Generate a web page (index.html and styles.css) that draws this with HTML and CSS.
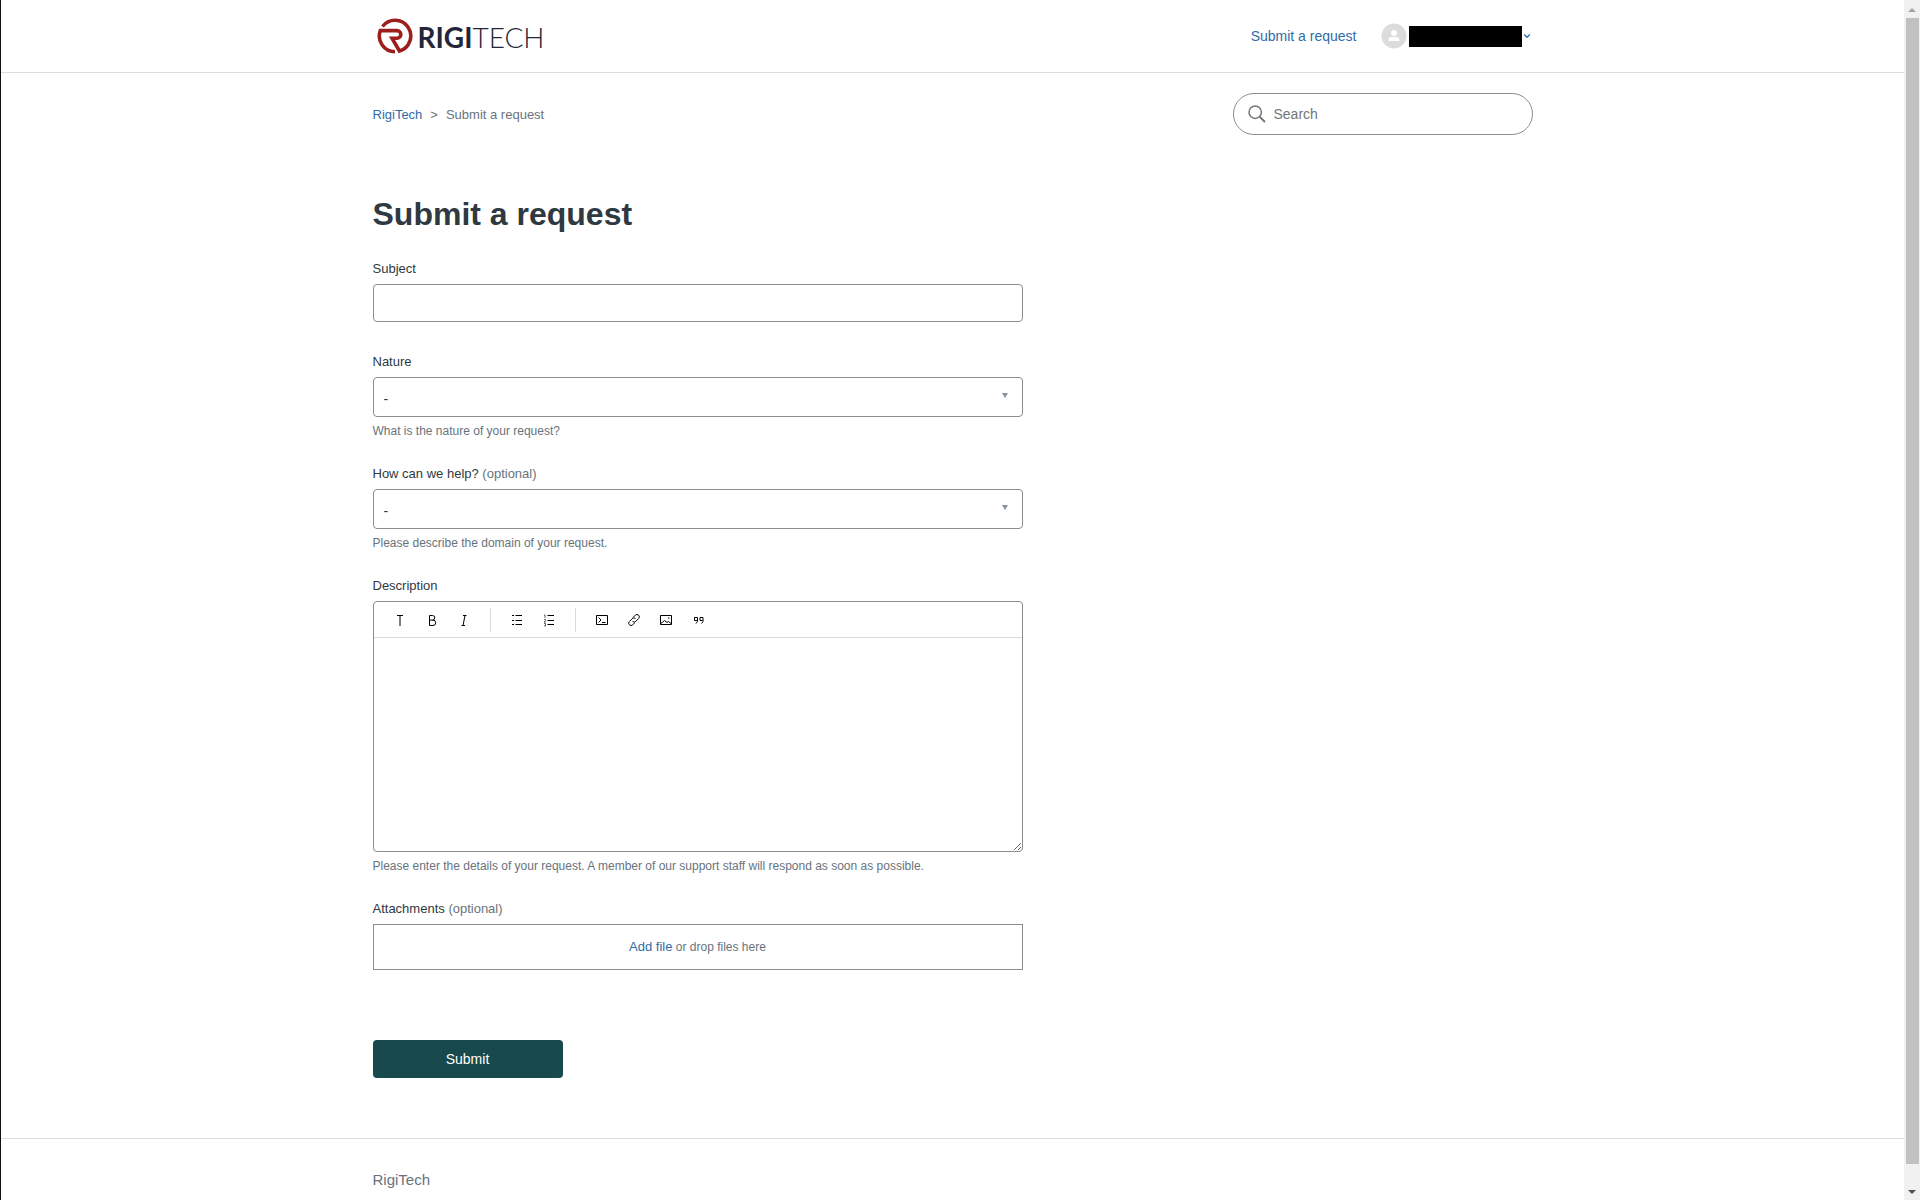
FILE: index.html
```html
<!DOCTYPE html>
<html lang="en">
  <head>
    <meta charset="UTF-8" />
    <meta name="viewport" content="width=device-width, initial-scale=1.0" />
    <title>Submit a request - RigiTech</title>
    <link rel="stylesheet" href="styles.css">
  </head>
  <body>
    <div class="page">
      <header class="header">
        <div class="container header-inner">
          <a class="logo" href="#" aria-label="RigiTech home">
            <svg class="logo-mark" viewBox="0 0 36 36" fill="none" stroke="#9c1f1c" stroke-width="3.6" aria-hidden="true">
              <path d="M5.500 8.500A15.700 15.700 0 1 1 22.500 33L15 20.200H20a3.800 3.800 0 0 0 0-7.600H3.300A15.700 15.700 0 0 0 18 33.700" />
            </svg>
            <span class="logo-text"><b>RIGI</b>TECH</span>
          </a>
          <nav class="user-nav">
            <a href="#">Submit a request</a>
            <button type="button" class="user" aria-label="User menu">
              <svg class="avatar" viewBox="0 0 26 26" aria-hidden="true">
                <circle cx="13" cy="13" r="12.5" fill="#dcdcdc" />
                <circle cx="13" cy="10" r="3" fill="#fff" />
                <path d="M7.5 18v-1.500a3 3 0 0 1 3-2.500h5a3 3 0 0 1 3 2.500v1.500z" fill="#fff" />
              </svg>
              <span class="user-name"></span>
              <svg class="chevron" viewBox="0 0 8 8" fill="none" stroke="#2f6ca8" stroke-width="1.300" aria-hidden="true">
                <path d="M1.200 2.500L4 5.300l2.800-2.800" />
              </svg>
            </button>
          </nav>
        </div>
      </header>

      <main class="container main">
        <div class="sub-nav">
          <ol class="breadcrumbs">
            <li><a href="#">RigiTech</a></li>
            <li>Submit a request</li>
          </ol>
          <form class="search" role="search">
            <svg viewBox="0 0 18 18" fill="none" stroke="#777" stroke-width="1.500" aria-hidden="true">
              <circle cx="7.200" cy="7.200" r="6.200" />
              <path d="M11.700 11.700L17 17" stroke-width="2" />
            </svg>
            <input type="search" placeholder="Search" aria-label="Search" />
          </form>
        </div>

        <h1>Submit a request</h1>

        <form class="request-form">
          <div class="field field-plain">
            <label for="subject">Subject</label>
            <input type="text" id="subject" name="subject" />
          </div>

          <div class="field">
            <label for="nature">Nature</label>
            <div class="select">
              <select id="nature" name="nature">
                <option>-</option>
              </select>
              <svg viewBox="0 0 6 5" fill="#87929d" aria-hidden="true"><path d="M0 0h6L3 5z" /></svg>
            </div>
            <p class="hint">What is the nature of your request?</p>
          </div>

          <div class="field">
            <label for="domain">How can we help? <span>(optional)</span></label>
            <div class="select">
              <select id="domain" name="domain">
                <option>-</option>
              </select>
              <svg viewBox="0 0 6 5" fill="#87929d" aria-hidden="true"><path d="M0 0h6L3 5z" /></svg>
            </div>
            <p class="hint">Please describe the domain of your request.</p>
          </div>

          <div class="field">
            <label for="description">Description</label>
            <div class="editor">
              <div class="toolbar">
                <button type="button" aria-label="Heading">
                  <svg viewBox="0 0 16 16"><path d="M5 3.500h6M8 3.500V14" /></svg>
                </button>
                <button type="button" aria-label="Bold">
                  <svg viewBox="0 0 16 16"><path d="M5.500 3.500V13.500M5.500 3.500H8.500a2.200 2.200 0 0 1 0 4.600H5.500M8.500 8.100h.500a2.500 2.500 0 0 1 0 5.400H5.500" /></svg>
                </button>
                <button type="button" aria-label="Italic">
                  <svg viewBox="0 0 16 16"><path d="M7 3.500h3.500M5.500 13.500H9M9 3.500L7 13.500" /></svg>
                </button>
                <span class="divider"></span>
                <button type="button" aria-label="Bulleted list">
                  <svg viewBox="0 0 16 16"><path d="M6.500 3.500H13M6.500 8.500H13M6.500 12.500H13M3 3.500h2M3 8.500h2M3 12.500h2" /></svg>
                </button>
                <button type="button" aria-label="Numbered list">
                  <svg viewBox="0 0 16 16"><path d="M6.500 3.500H13M6.500 8.500H13M6.500 12.500H13" /><path d="M3 3h1v3M3 7.500h1.500v1L3 10h2M3 11.500h1.500V14H3" stroke-width=".6" /></svg>
                </button>
                <span class="divider"></span>
                <button type="button" aria-label="Code block">
                  <svg viewBox="0 0 16 16"><path d="M2.500 3.500h11v9h-11zM4.500 5.500l2.500 2.500-2.500 2.500M8 10.500h3.500" /></svg>
                </button>
                <button type="button" aria-label="Link">
                  <svg viewBox="0 0 16 16"><path d="M7 5.500l2.300-2.300a2.200 2.200 0 0 1 3.300 3.300L9.800 9.300a2.200 2.200 0 0 1-3.300 0M9 10.500l-2.300 2.300a2.200 2.200 0 0 1-3.300-3.300l2.800-2.800a2.200 2.200 0 0 1 3.300 0" /></svg>
                </button>
                <button type="button" aria-label="Image">
                  <svg viewBox="0 0 16 16"><path d="M2.500 3.500h11v9h-11zM3 11.500L6.500 8.500 9 10.500l1.500-1 2.500 2M10 6h1.500" /></svg>
                </button>
                <button type="button" aria-label="Quote">
                  <svg viewBox="0 0 16 16"><path d="M7 8.500H4.500V5.500h3v4L6 11.500M12.500 8.500H10V5.500h3v4l-1.500 2" /></svg>
                </button>
              </div>
              <textarea id="description" name="description"></textarea>
            </div>
            <p class="hint">Please enter the details of your request. A member of our support staff will respond as soon as possible.</p>
          </div>

          <div class="field">
            <label for="attachments">Attachments <span>(optional)</span></label>
            <div class="dropzone">
              <input type="file" id="attachments" name="attachments" hidden />
              <a href="#">Add file</a>&nbsp;<span>or drop files here</span>
            </div>
          </div>

          <button type="submit" class="submit">Submit</button>
        </form>
      </main>

      <footer class="footer">
        <div class="container">
          <a href="#">RigiTech</a>
        </div>
      </footer>
    </div>

    <div class="scrollbar" aria-hidden="true">
      <svg viewBox="0 0 16 18" fill="#a3a3a3"><path d="M4 12h8L8 8z" /></svg>
      <div class="thumb"></div>
      <svg viewBox="0 0 16 18" fill="#505050"><path d="M4 8h8l-4 4z" /></svg>
    </div>
  </body>
</html>
```

FILE: styles.css
```css
* {
  box-sizing: border-box;
}

body {
  display: flex;
  min-height: 100vh;
  margin: 0;
  padding: 0 2px 2px 0;
  background: #fff;
  color: #2f3941;
  font-family: "Liberation Sans", Arial, sans-serif;
  font-size: 13px;
  line-height: 20px;
}

a {
  color: #2f6ca8;
  text-decoration: none;
}

button,
input,
select,
textarea {
  font: inherit;
  color: inherit;
}

.page {
  flex: 1;
  border-left: 1px solid #111;
}

.container {
  max-width: 1160px;
  margin: 0 auto;
}

/* header */
.header {
  border-bottom: 1px solid #ddd;
}

.header-inner {
  display: flex;
  justify-content: space-between;
  align-items: center;
  height: 72px;
}

.logo {
  display: flex;
  align-items: center;
  gap: 5px;
  padding-left: 4px;
  color: #23263a;
}

.logo-mark {
  width: 36px;
  height: 36px;
}

.logo-text {
  padding-top: 2px;
  font-family: Lato, sans-serif;
  font-size: 28px;
  font-weight: 300;
  line-height: 36px;
}

.logo-text b {
  font-weight: 700;
}

.user-nav {
  display: flex;
  align-items: center;
  gap: 24px;
  font-size: 14px;
}

.user {
  display: flex;
  align-items: center;
  padding: 0;
  border: 0;
  background: none;
}

.avatar {
  width: 26px;
  height: 26px;
  margin-right: 2px;
}

.user-name {
  width: 113px;
  height: 21px;
  background: #000;
}

.chevron {
  width: 8px;
  height: 8px;
  margin: 0 2px 0 1px;
}

/* breadcrumbs and search */
.sub-nav {
  display: flex;
  justify-content: space-between;
  align-items: center;
  padding: 20px 0 57px;
}

.breadcrumbs {
  display: flex;
  margin: 0;
  padding: 2px 0 0;
  list-style: none;
  color: #68737d;
}

.breadcrumbs li + li:before {
  content: ">";
  margin: 0 8px;
}

.search {
  display: flex;
  align-items: center;
  gap: 8px;
  width: 300px;
  height: 42px;
  padding: 0 14px;
  border: 1px solid #878f95;
  border-radius: 21px;
  font-size: 14px;
}

.search svg {
  width: 18px;
  height: 18px;
}

.search input {
  flex: 1;
  min-width: 0;
  padding: 0;
  border: 0;
  outline: 0;
  background: none;
}

.search input::placeholder {
  color: #757575;
}

h1 {
  margin: 0 0 23px;
  font-size: 32px;
  line-height: 44px;
}

/* request form */
.request-form {
  max-width: 650px;
}

.field {
  margin-bottom: 24px;
}

.field-plain {
  margin-bottom: 30px;
}

.field label {
  display: block;
  margin-bottom: 5px;
}

.field label span,
.hint {
  color: #68737d;
}

.field input[type="text"],
.field select,
.editor {
  display: block;
  width: 100%;
  border: 1px solid #878f95;
  border-radius: 4px;
  background: #fff;
}

.field input[type="text"] {
  height: 38px;
  padding: 0 10px;
}

.select {
  display: grid;
  align-items: center;
}

.select select,
.select svg {
  grid-area: 1 / 1;
}

.field select {
  height: 40px;
  padding: 3px 30px 0 10px;
  appearance: none;
  font-size: 14px;
}

.select svg {
  justify-self: end;
  width: 6px;
  height: 5px;
  margin: 0 15px 4px 0;
  pointer-events: none;
}

.hint {
  margin: 6px 0 0;
  font-size: 12px;
  line-height: 17px;
}

.toolbar {
  display: flex;
  align-items: center;
  height: 36px;
  padding: 0 10px;
  border-bottom: 1px solid #d8dcde;
}

.toolbar button {
  display: flex;
  justify-content: center;
  width: 32px;
  padding: 0;
  border: 0;
  background: none;
}

.toolbar svg {
  width: 16px;
  height: 16px;
  fill: none;
  stroke: #000;
}

.divider {
  width: 1px;
  height: 24px;
  margin: 0 10px;
  background: #d8dcde;
}

.editor textarea {
  display: block;
  width: 100%;
  height: 213px;
  padding: 10px;
  border: 0;
  outline: 0;
  background: none;
  resize: vertical;
}

.dropzone {
  display: flex;
  justify-content: center;
  align-items: center;
  height: 46px;
  border: 1px solid #878f95;
  color: #68737d;
  font-size: 12px;
}

.dropzone a {
  font-size: 13px;
}

.submit {
  width: 190px;
  height: 38px;
  margin: 46px 0 60px;
  border: 0;
  border-radius: 4px;
  background: #17494d;
  color: #fff;
  font-size: 14px;
}

/* footer */
.footer {
  padding: 30px 0 8px;
  border-top: 1px solid #ddd;
  font-size: 15px;
  line-height: 22px;
}

.footer a {
  color: #68737d;
}

/* scrollbar */
.scrollbar {
  display: flex;
  flex-direction: column;
  align-items: center;
  width: 16px;
  background: #f1f1f1;
}

.scrollbar svg {
  width: 16px;
  height: 18px;
}

.thumb {
  flex: 1;
  width: 13px;
  margin-bottom: 18px;
  background: #c1c1c1;
}
```
